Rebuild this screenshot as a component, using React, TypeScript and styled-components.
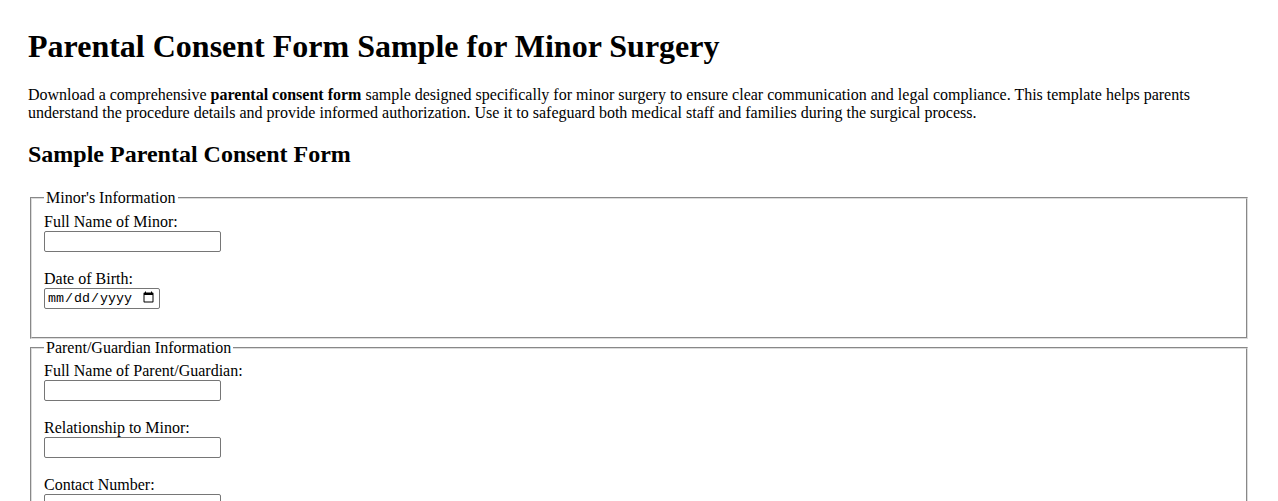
import React, { JSX } from "react";
import styled, { createGlobalStyle } from "styled-components";

const GlobalStyle = createGlobalStyle`
    html, body {
        margin: 0;
        padding: 0;
        background: #ffffff;
    }
    body {
        font-family: "Liberation Serif", "Times New Roman", serif;
        font-size: 16px;
        color: #000000;
    }
`

interface fieldProps {
    id: string,
    label: string,
    type?: string
}

const Field = ({ id, label, type = "text" }: fieldProps): JSX.Element => {
    return (
        <FieldWrapper>
            <Label htmlFor={id}>{label}</Label>
            {type === "date" ? <DateInput id={id} type="date" /> : <TextInput id={id} type={type} />}
        </FieldWrapper>
    )
}

const App = (): JSX.Element => {
    return (
        <Page>
            <GlobalStyle />
            <Title>Parental Consent Form Sample for Minor Surgery</Title>
            <Intro>
                Download a comprehensive <strong>parental consent form</strong> sample designed specifically for minor surgery to ensure clear communication and legal compliance. This template helps parents understand the procedure details and provide informed authorization. Use it to safeguard both medical staff and families during the surgical process.
            </Intro>
            <SubTitle>Sample Parental Consent Form</SubTitle>
            <form>
                <Section>
                    <Legend>Minor's Information</Legend>
                    <Field id="minorName" label="Full Name of Minor:" />
                    <Field id="minorDob" label="Date of Birth:" type="date" />
                </Section>
                <Section>
                    <Legend>Parent/Guardian Information</Legend>
                    <Field id="parentName" label="Full Name of Parent/Guardian:" />
                    <Field id="relationship" label="Relationship to Minor:" />
                    <Field id="contact" label="Contact Number:" type="tel" />
                    <Field id="email" label="Email Address:" type="email" />
                </Section>
                <Section>
                    <Legend>Surgery Details</Legend>
                    <Field id="procedure" label="Name of Procedure:" />
                    <Field id="surgeon" label="Surgeon's Name:" />
                    <Field id="surgeryDate" label="Scheduled Date:" type="date" />
                </Section>
            </form>
        </Page>
    )
}

export default App

const Page = styled.div`
    padding: 28px;
`

const Title = styled.h1`
    font-size: 32px;
    font-weight: bold;
    margin: 0 0 21px 0;
`

const Intro = styled.p`
    margin: 0 0 19px 0;
    line-height: 18px;
`

const SubTitle = styled.h2`
    font-size: 24px;
    font-weight: bold;
    margin: 0 0 21px 0;
`

const Section = styled.fieldset`
    margin: 0 2px;
    padding: 5.6px 12px 10px 12px;
    border: 2px groove #dcdcdc;
`

const Legend = styled.legend`
    padding: 0 2px;
    line-height: 18px;
`

const FieldWrapper = styled.div`
    margin-bottom: 18px;
`

const Label = styled.label`
    display: block;
    line-height: 18px;
    height: 18px;
`

const TextInput = styled.input`
    display: block;
    box-sizing: border-box;
    width: 177px;
    height: 21px;
    margin: 0;
    padding: 1px 2px;
    border: 1px solid #767676;
    border-radius: 2px;
    font-family: "Liberation Sans", Arial, sans-serif;
    font-size: 13.33px;
`

const DateInput = styled.input`
    display: block;
    box-sizing: border-box;
    width: 116px;
    height: 21px;
    margin: 0;
    padding: 1px 2px;
    border: 1px solid #767676;
    border-radius: 2px;
    font-family: "Liberation Mono", "Courier New", monospace;
    font-size: 13.33px;
`
